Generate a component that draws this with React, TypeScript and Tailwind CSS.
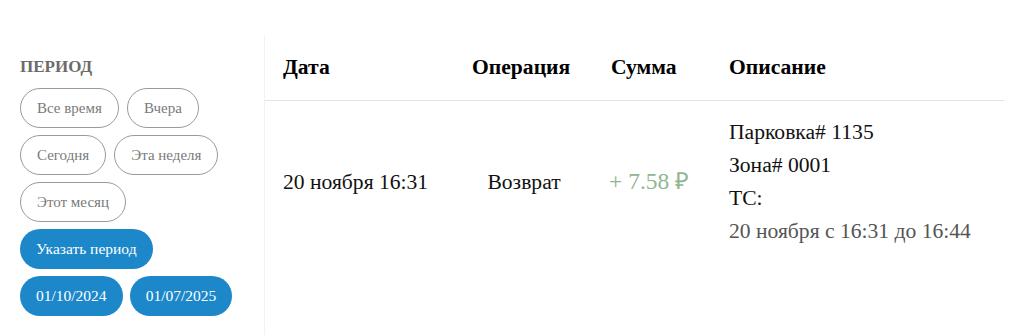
import type { ReactNode } from "react";

const serif = "font-['Liberation_Serif','Times_New_Roman',serif]";

function Pill({ children, active }: { children: ReactNode; active?: boolean }) {
  if (active) {
    return (
      <button className="h-[40px] rounded-full bg-[#1c87c9] px-4 text-[15.5px] text-white">
        {children}
      </button>
    );
  }
  return (
    <button className="h-[40px] rounded-full border border-[#9a9a9a] bg-white px-4 text-[15px] text-[#7a7a7a]">
      {children}
    </button>
  );
}

export default function App() {
  return (
    <div className={`${serif} h-[335px] w-[1024px] overflow-hidden bg-white pt-[35px]`}>
      <div className="flex h-full">
        <aside className="w-[265px] shrink-0 border-r border-[#f2f2f2] pl-5 pt-5">
          <h3 className="mb-[9px] text-[17px] leading-6 font-bold text-[#6b6b6b]">ПЕРИОД</h3>
          <div className="flex flex-col gap-[7px]">
            <div className="flex gap-2">
              <Pill>Все время</Pill>
              <Pill>Вчера</Pill>
            </div>
            <div className="flex gap-2">
              <Pill>Сегодня</Pill>
              <Pill>Эта неделя</Pill>
            </div>
            <div className="flex gap-2">
              <Pill>Этот месяц</Pill>
            </div>
            <div className="flex gap-2">
              <Pill active>Указать период</Pill>
            </div>
            <div className="flex gap-[7px]">
              <Pill active>01/10/2024</Pill>
              <Pill active>01/07/2025</Pill>
            </div>
          </div>
        </aside>

        <main className="flex-1 pr-5">
          <div className="grid h-[66px] grid-cols-[189px_140px_117px_1fr] items-center border-b border-[#e4e4e4] text-[21.6px] font-bold text-black">
            <div className="pl-[18px]">Дата</div>
            <div className="pl-[18px]">Операция</div>
            <div className="pl-[17px]">Сумма</div>
            <div className="pl-[18px]">Описание</div>
          </div>
          <div className="grid grid-cols-[189px_140px_117px_1fr] items-center pt-[15px] text-[21.6px] text-[#111]">
            <div className="pl-[18px]">20 ноября 16:31</div>
            <div className="text-center">Возврат</div>
            <div className="pl-[15px] text-[23.5px] text-[#8fb68f]">+ 7.58 ₽</div>
            <div className="pl-[18px] leading-[33px]">
              <div>Парковка# 1135</div>
              <div>Зона# 0001</div>
              <div>ТС:</div>
              <div className="text-[#555]">20 ноября с 16:31 до 16:44</div>
            </div>
          </div>
        </main>
      </div>
    </div>
  );
}
